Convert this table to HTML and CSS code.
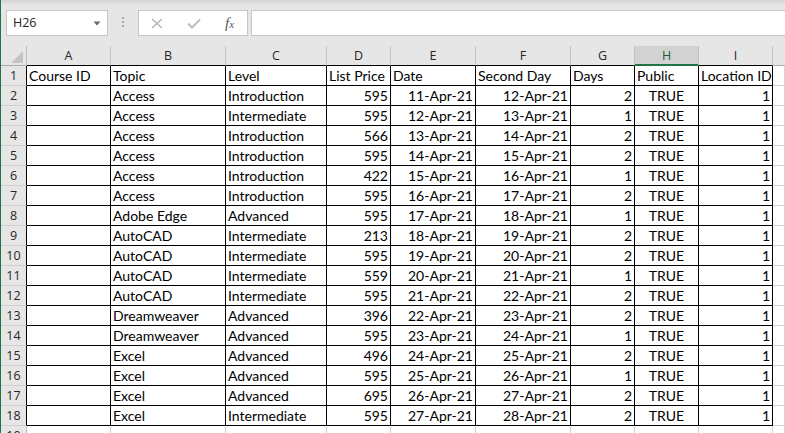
FILE: index.html
```html
<!DOCTYPE html>
<html>
<head>
<meta charset="utf-8">
<link rel="stylesheet" href="styles.css">
</head>
<body>
<div class="app">
  <div class="fbar">
    <div class="namebox"><span class="ref">H26</span><svg class="dd" width="8" height="5" viewBox="0 0 8 5"><path d="M0.5 0.5 H7.5 L4 4.5 Z" fill="#6b6b6b"/></svg></div>
    <div class="grip"><i></i><i></i><i></i></div>
    <div class="fbtns">
      <svg class="ico" width="12" height="11" viewBox="0 0 12 11"><path d="M1 1 L11 10 M11 1 L1 10" stroke="#b3b3b3" stroke-width="1.4" fill="none"/></svg>
      <svg class="ico" width="14" height="11" viewBox="0 0 14 11"><path d="M1 5.5 L5 9.5 L13 1.5" stroke="#bdbdbd" stroke-width="2" fill="none"/></svg>
      <span class="fx">f<span class="fxx">x</span></span>
    </div>
    <div class="finput"></div>
  </div>
  <div class="sheet">
    <div class="corner"><svg width="12" height="12" viewBox="0 0 12 12"><path d="M12 0 V12 H0 Z" fill="#c4c4c4"/></svg></div>
    <div class="ch">A</div><div class="ch">B</div><div class="ch">C</div><div class="ch">D</div><div class="ch">E</div><div class="ch">F</div><div class="ch">G</div><div class="ch sel">H</div><div class="ch">I</div><div class="ch j"></div>

    <div class="rh">1</div><div class="c">Course ID</div><div class="c">Topic</div><div class="c">Level</div><div class="c">List Price</div><div class="c">Date</div><div class="c">Second Day</div><div class="c">Days</div><div class="c">Public</div><div class="c">Location ID</div><div class="g"></div>
    <div class="rh">2</div><div class="c"></div><div class="c">Access</div><div class="c">Introduction</div><div class="c n">595</div><div class="c n">11-Apr-21</div><div class="c n">12-Apr-21</div><div class="c n">2</div><div class="c t">TRUE</div><div class="c n">1</div><div class="g"></div>
    <div class="rh">3</div><div class="c"></div><div class="c">Access</div><div class="c">Intermediate</div><div class="c n">595</div><div class="c n">12-Apr-21</div><div class="c n">13-Apr-21</div><div class="c n">1</div><div class="c t">TRUE</div><div class="c n">1</div><div class="g"></div>
    <div class="rh">4</div><div class="c"></div><div class="c">Access</div><div class="c">Introduction</div><div class="c n">566</div><div class="c n">13-Apr-21</div><div class="c n">14-Apr-21</div><div class="c n">2</div><div class="c t">TRUE</div><div class="c n">1</div><div class="g"></div>
    <div class="rh">5</div><div class="c"></div><div class="c">Access</div><div class="c">Introduction</div><div class="c n">595</div><div class="c n">14-Apr-21</div><div class="c n">15-Apr-21</div><div class="c n">2</div><div class="c t">TRUE</div><div class="c n">1</div><div class="g"></div>
    <div class="rh">6</div><div class="c"></div><div class="c">Access</div><div class="c">Introduction</div><div class="c n">422</div><div class="c n">15-Apr-21</div><div class="c n">16-Apr-21</div><div class="c n">1</div><div class="c t">TRUE</div><div class="c n">1</div><div class="g"></div>
    <div class="rh">7</div><div class="c"></div><div class="c">Access</div><div class="c">Introduction</div><div class="c n">595</div><div class="c n">16-Apr-21</div><div class="c n">17-Apr-21</div><div class="c n">2</div><div class="c t">TRUE</div><div class="c n">1</div><div class="g"></div>
    <div class="rh">8</div><div class="c"></div><div class="c">Adobe Edge</div><div class="c">Advanced</div><div class="c n">595</div><div class="c n">17-Apr-21</div><div class="c n">18-Apr-21</div><div class="c n">1</div><div class="c t">TRUE</div><div class="c n">1</div><div class="g"></div>
    <div class="rh">9</div><div class="c"></div><div class="c">AutoCAD</div><div class="c">Intermediate</div><div class="c n">213</div><div class="c n">18-Apr-21</div><div class="c n">19-Apr-21</div><div class="c n">2</div><div class="c t">TRUE</div><div class="c n">1</div><div class="g"></div>
    <div class="rh">10</div><div class="c"></div><div class="c">AutoCAD</div><div class="c">Intermediate</div><div class="c n">595</div><div class="c n">19-Apr-21</div><div class="c n">20-Apr-21</div><div class="c n">2</div><div class="c t">TRUE</div><div class="c n">1</div><div class="g"></div>
    <div class="rh">11</div><div class="c"></div><div class="c">AutoCAD</div><div class="c">Intermediate</div><div class="c n">559</div><div class="c n">20-Apr-21</div><div class="c n">21-Apr-21</div><div class="c n">1</div><div class="c t">TRUE</div><div class="c n">1</div><div class="g"></div>
    <div class="rh">12</div><div class="c"></div><div class="c">AutoCAD</div><div class="c">Intermediate</div><div class="c n">595</div><div class="c n">21-Apr-21</div><div class="c n">22-Apr-21</div><div class="c n">2</div><div class="c t">TRUE</div><div class="c n">1</div><div class="g"></div>
    <div class="rh">13</div><div class="c"></div><div class="c">Dreamweaver</div><div class="c">Advanced</div><div class="c n">396</div><div class="c n">22-Apr-21</div><div class="c n">23-Apr-21</div><div class="c n">2</div><div class="c t">TRUE</div><div class="c n">1</div><div class="g"></div>
    <div class="rh">14</div><div class="c"></div><div class="c">Dreamweaver</div><div class="c">Advanced</div><div class="c n">595</div><div class="c n">23-Apr-21</div><div class="c n">24-Apr-21</div><div class="c n">1</div><div class="c t">TRUE</div><div class="c n">1</div><div class="g"></div>
    <div class="rh">15</div><div class="c"></div><div class="c">Excel</div><div class="c">Advanced</div><div class="c n">496</div><div class="c n">24-Apr-21</div><div class="c n">25-Apr-21</div><div class="c n">2</div><div class="c t">TRUE</div><div class="c n">1</div><div class="g"></div>
    <div class="rh">16</div><div class="c"></div><div class="c">Excel</div><div class="c">Advanced</div><div class="c n">595</div><div class="c n">25-Apr-21</div><div class="c n">26-Apr-21</div><div class="c n">1</div><div class="c t">TRUE</div><div class="c n">1</div><div class="g"></div>
    <div class="rh">17</div><div class="c"></div><div class="c">Excel</div><div class="c">Advanced</div><div class="c n">695</div><div class="c n">26-Apr-21</div><div class="c n">27-Apr-21</div><div class="c n">2</div><div class="c t">TRUE</div><div class="c n">1</div><div class="g"></div>
    <div class="rh">18</div><div class="c"></div><div class="c">Excel</div><div class="c">Intermediate</div><div class="c n">595</div><div class="c n">27-Apr-21</div><div class="c n">28-Apr-21</div><div class="c n">2</div><div class="c t">TRUE</div><div class="c n">1</div><div class="g"></div>
    <div class="rh plain">19</div><div class="g"></div><div class="g"></div><div class="g"></div><div class="g"></div><div class="g"></div><div class="g"></div><div class="g"></div><div class="g"></div><div class="g"></div><div class="g"></div>
  </div>
</div>
</body>
</html>
```

FILE: styles.css
```css
html, body {
  margin: 0;
  padding: 0;
  width: 785px;
  height: 433px;
  overflow: hidden;
  background: #e6e6e6;
}

.app {
  height: 433px;
  border-left: 1px solid #217346;
  background: linear-gradient(#d3d3d3, #e4e4e4 4px, #e6e6e6 8px);
  overflow: hidden;
  font-family: "Open Sans", "Noto Sans", sans-serif;
}

/* formula bar */
.fbar {
  display: flex;
  padding: 10px 0 0 5px;
  height: 26px;
}

.namebox {
  box-sizing: border-box;
  width: 102px;
  height: 26px;
  background: #fff;
  border: 1px solid #c6c6c6;
  display: flex;
  align-items: center;
  justify-content: space-between;
  padding: 0 6px 0 6px;
}

.ref {
  font-size: 12.5px;
  line-height: 24px;
  color: #222;
}

.dd {
  display: block;
}

.grip {
  width: 30px;
  display: flex;
  flex-direction: column;
  align-items: center;
  padding-top: 7px;
  gap: 2px;
}

.grip i {
  display: block;
  width: 2px;
  height: 2px;
  background: #a9a9a9;
}

.fbtns {
  box-sizing: border-box;
  width: 110px;
  height: 26px;
  background: #fff;
  border: 1px solid #c6c6c6;
  display: flex;
  align-items: center;
  padding-left: 12px;
  gap: 24px;
}

.ico {
  display: block;
}

.fx {
  font-family: "Liberation Serif", serif;
  font-style: italic;
  font-size: 15px;
  color: #555;
  line-height: 1;
}

.fxx {
  font-size: 11px;
}

.finput {
  flex: 1;
  height: 26px;
  box-sizing: border-box;
  margin-left: 3px;
  margin-right: -2px;
  background: #fff;
  border: 1px solid #c6c6c6;
}

/* sheet */
.sheet {
  margin-top: 10px;
  display: grid;
  grid-template-columns: 26px 84px 115px 101px 64px 85px 95px 64px 64px 74px 1fr;
  grid-auto-rows: 20px;
  background: #fff;
}

.sheet > div {
  box-sizing: border-box;
  overflow: hidden;
  white-space: nowrap;
}

.corner {
  background: #e6e6e6;
  border-right: 1px solid #c0c0c0;
  border-bottom: 1px solid #ababab;
  display: flex;
  align-items: flex-end;
  justify-content: flex-end;
  padding: 0 3px 2px 0;
}

.corner svg {
  display: block;
}

.ch {
  background: #e6e6e6;
  border-right: 1px solid #c3c3c3;
  border-bottom: 1px solid #000;
  text-align: center;
  font-size: 12.5px;
  line-height: 19px;
  color: #262626;
}

.ch.sel {
  background: #d2d2d2;
  border-bottom: 2px solid #217346;
  color: #1e5a37;
}

.ch.j {
  border-right: none;
  border-bottom-color: #ababab;
}

.rh {
  background: #e6e6e6;
  border-right: 1px solid #000;
  border-bottom: 1px solid #cfcfcf;
  text-align: center;
  font-size: 12.5px;
  line-height: 19px;
  color: #262626;
}

.rh.plain {
  border-right-color: #bdbdbd;
}

.c {
  border-right: 1px solid #000;
  border-bottom: 1px solid #000;
  font-family: Lato, "Liberation Sans", sans-serif;
  font-size: 14px;
  line-height: 18px;
  color: #000;
  padding: 1px 2px 0 2px;
}

.c.n {
  text-align: right;
}

.c.t {
  text-align: center;
}

.g {
  border-right: 1px solid #d4d4d4;
  border-bottom: 1px solid #d4d4d4;
}
```
